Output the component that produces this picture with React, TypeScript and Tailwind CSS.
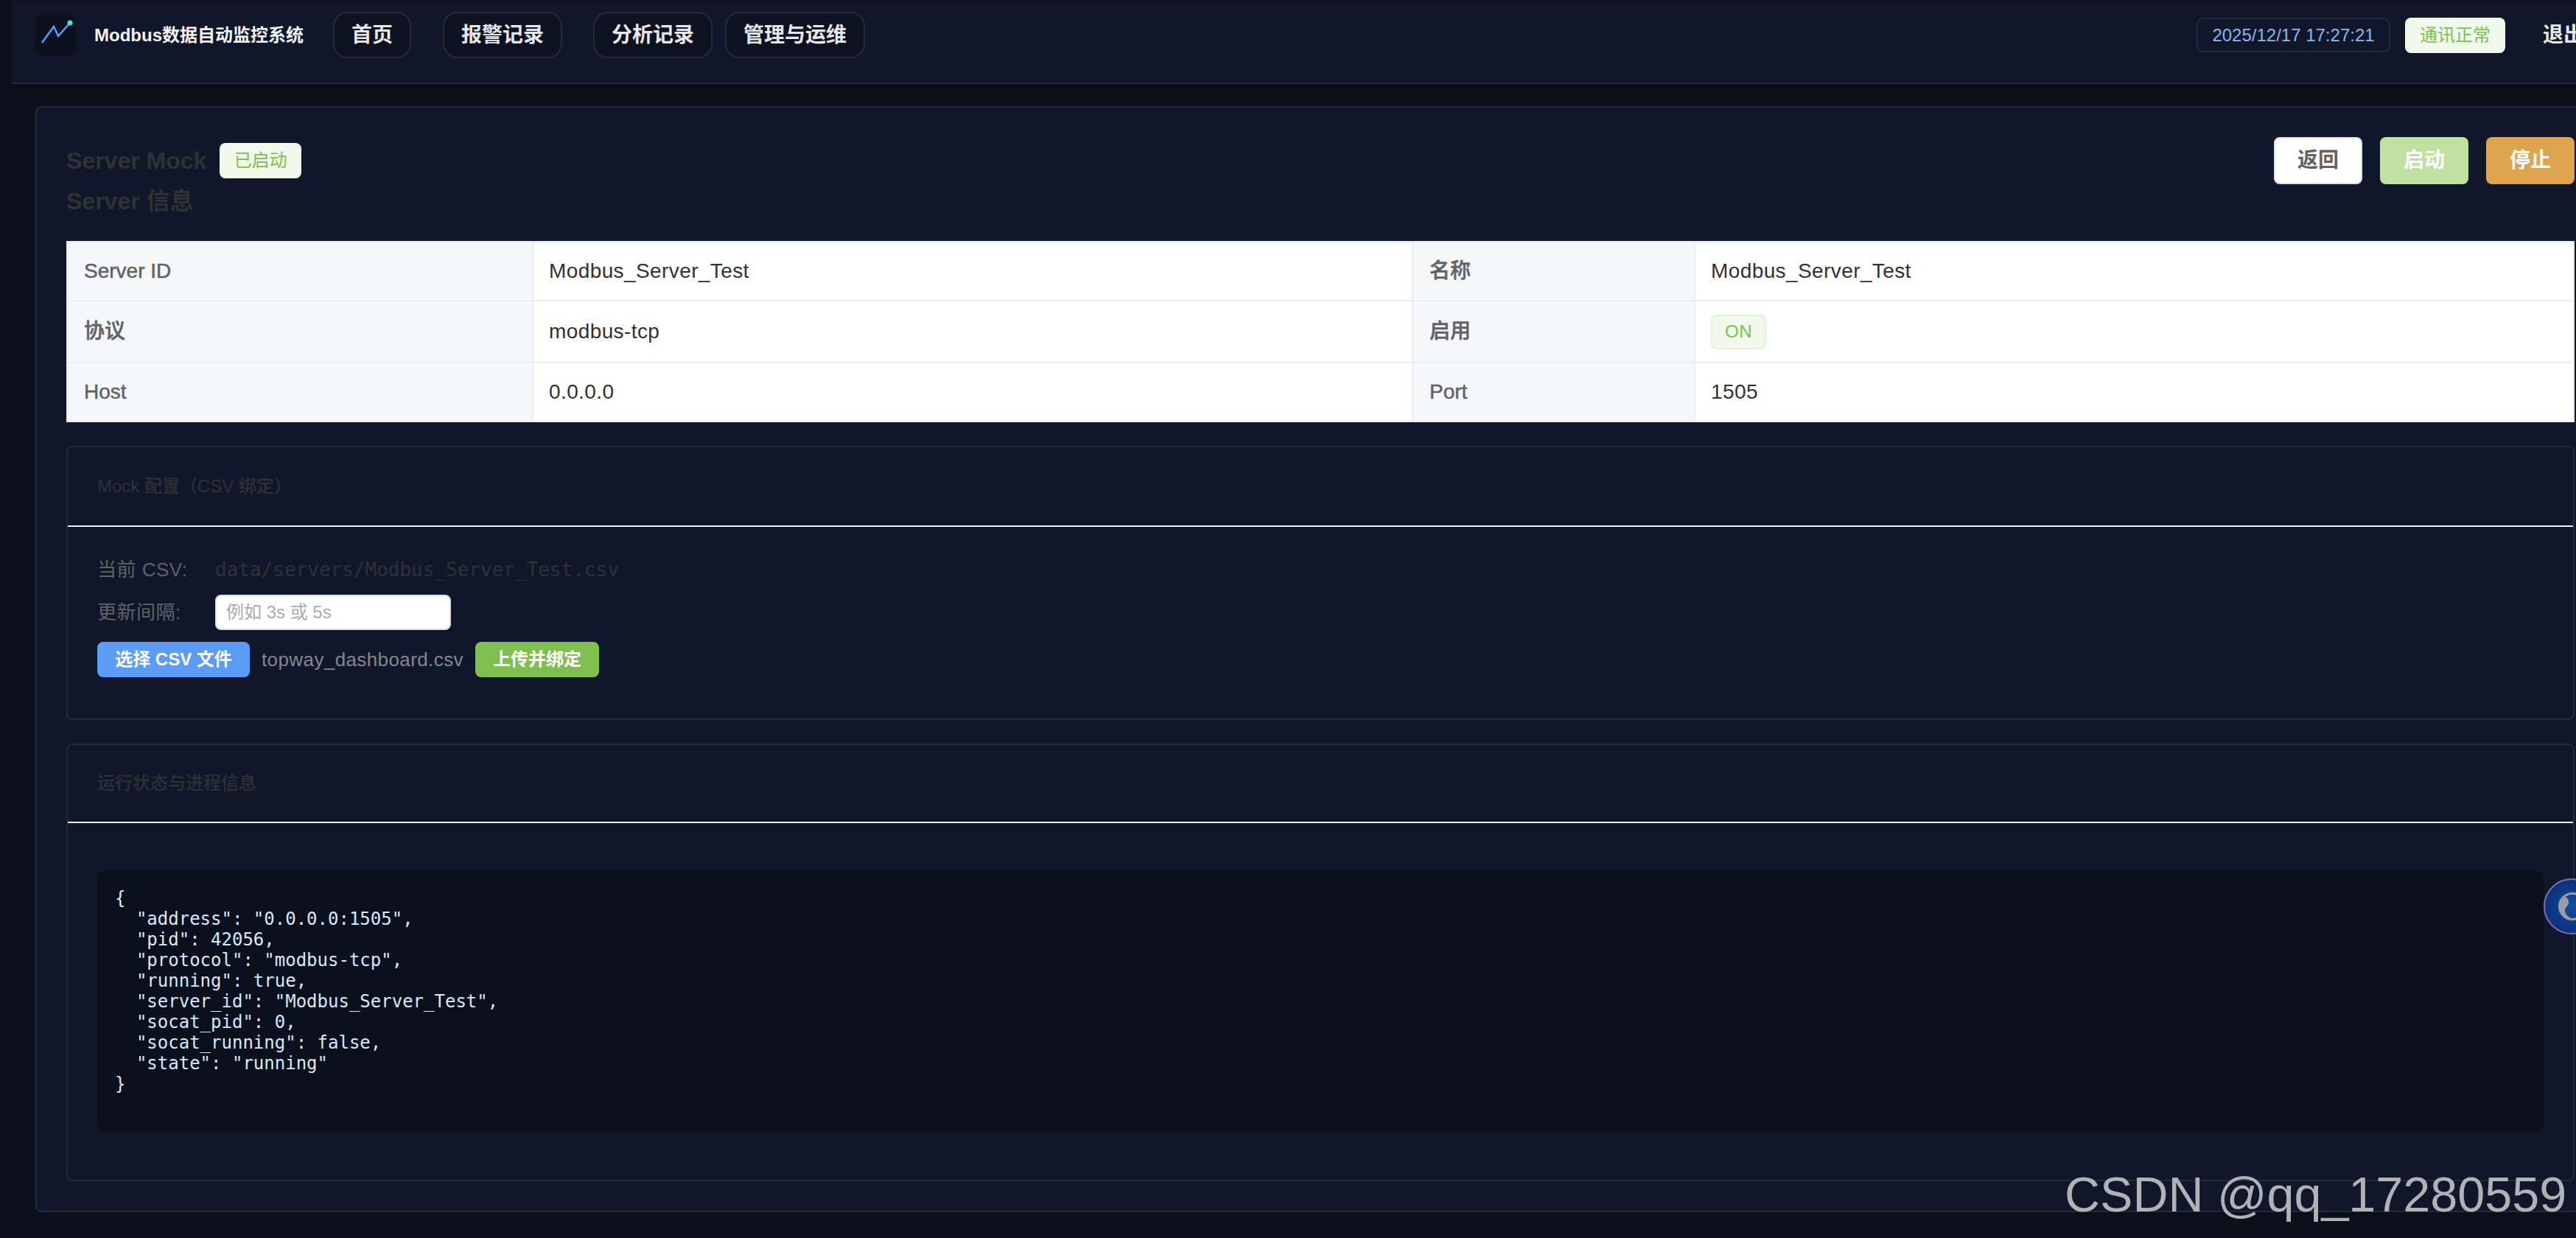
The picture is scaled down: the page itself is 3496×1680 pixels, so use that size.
import { Fragment } from 'react';

const navItems = [
  { label: '首页', className: 'ml-10' },
  { label: '报警记录', className: 'ml-[43px]' },
  { label: '分析记录', className: 'ml-[42px]' },
  { label: '管理与运维', className: 'ml-[17px]' },
];

const infoRows = [
  { a: 'Server ID', b: 'Modbus_Server_Test', c: '名称', d: 'Modbus_Server_Test' },
  { a: '协议', b: 'modbus-tcp', c: '启用', d: 'ON' },
  { a: 'Host', b: '0.0.0.0', c: 'Port', d: '1505' },
];

const statusJson = `{
  "address": "0.0.0.0:1505",
  "pid": 42056,
  "protocol": "modbus-tcp",
  "running": true,
  "server_id": "Modbus_Server_Test",
  "socat_pid": 0,
  "socat_running": false,
  "state": "running"
}

`;

function Logo() {
  return (
    <div className="w-14 h-14 rounded-[12px] bg-[#0b111d] shrink-0">
      <svg width="56" height="56" viewBox="0 0 56 56" fill="none">
        <polyline points="9,38 25,16 31,29 47,11" stroke="#5b9cf5" strokeWidth="2.6" />
        <circle cx="47" cy="11" r="3.6" fill="#5bd0ee" />
      </svg>
    </div>
  );
}

function Header() {
  return (
    <header className="ml-4 mt-px h-[113px] shrink-0 flex items-start pl-8 border-b-2 border-[#232a3a] bg-[#10172a]">
      <div className="mt-[19px] shrink-0">
        <Logo />
      </div>
      <div className="ml-6 mt-[19px] h-14 shrink-0 flex items-center text-[24px] font-bold text-[#f1f3f7] whitespace-nowrap">
        Modbus数据自动监控系统
      </div>
      {navItems.map((item) => (
        <button
          key={item.label}
          className={`${item.className} mt-[15px] h-[63px] shrink-0 px-[23px] rounded-[20px] border-2 border-[#232a3a] bg-[#0c1220] text-[28px] font-semibold text-[#e5e7eb] whitespace-nowrap`}
        >
          {item.label}
        </button>
      ))}
      <div className="ml-auto mt-[23px] h-[47px] w-[263px] shrink-0 flex items-center justify-center rounded-[10px] border-2 border-[#232a3a] bg-[#10172a] text-[24px] text-[#8ab8f0] whitespace-nowrap">
        2025/12/17 17:27:21
      </div>
      <div className="ml-5 mt-[23px] h-[48px] w-[136px] shrink-0 flex items-center justify-center rounded-[8px] bg-[#f0f9eb] text-[24px] text-[#7cc04f] whitespace-nowrap">
        通讯正常
      </div>
      <div className="ml-[51px] mt-[23px] h-[48px] w-[45px] shrink-0 flex items-center overflow-hidden text-[28px] font-semibold text-[#e5e7eb] whitespace-nowrap">
        退出
      </div>
    </header>
  );
}

function InfoTable() {
  return (
    <div className="grid grid-cols-[630px_1192px_381px_1fr] gap-[2px] p-[2px] bg-[#ebeef5] text-[28px]">
      {infoRows.map((row) => (
        <Fragment key={row.a}>
          <div className={`${row.a === '协议' ? 'h-[82px]' : 'h-[78px]'} flex items-center pl-[22px] bg-[#f5f7fa] font-medium text-[#606266] [-webkit-text-stroke:0.5px_#606266]`}>{row.a}</div>
          <div className="flex items-center pl-[21px] bg-white text-[#303133] tracking-[0.4px]">{row.b}</div>
          <div className="flex items-center pl-[22px] bg-[#f5f7fa] font-medium text-[#606266] [-webkit-text-stroke:0.5px_#606266]">{row.c}</div>
          <div className="flex items-center pl-[21px] bg-white text-[#303133] tracking-[0.4px]">
            {row.d === 'ON' ? (
              <span className="h-[47px] w-[75px] flex items-center justify-center rounded-[8px] border-2 border-[#e1f3d8] bg-[#f0f9eb] text-[24px] text-[#7cc04f]">ON</span>
            ) : (
              row.d
            )}
          </div>
        </Fragment>
      ))}
    </div>
  );
}

function MockConfig() {
  return (
    <section className="mt-8 rounded-lg border-2 border-[#232a3a] bg-[#10172a]">
      <div className="h-[108px] flex items-center px-10 border-b-2 border-[#ebeef5] text-[24px] font-medium text-[#303133]">
        Mock 配置（CSV 绑定）
      </div>
      <div className="p-10 text-[26px]">
        <div className="h-9 flex items-center text-[#606266]">
          <span className="w-[160px] tracking-[0.5px]">当前 CSV:</span>
          <span className="font-['DejaVu_Sans_Mono',monospace] text-[#303133]">data/servers/Modbus_Server_Test.csv</span>
        </div>
        <div className="mt-4 h-12 flex items-center text-[#606266]">
          <span className="w-[160px] tracking-[0.5px]">更新间隔:</span>
          <input
            placeholder="例如 3s 或 5s"
            className="w-[320px] h-12 px-[13px] rounded-lg border-2 border-[#dcdfe6] bg-white text-[24px] placeholder:text-[#a8abb2] outline-none"
          />
        </div>
        <div className="mt-4 mb-4 flex items-center">
          <button className="h-12 w-[207px] rounded-lg bg-[#5a9cf8] text-[24px] font-semibold text-white">选择 CSV 文件</button>
          <span className="ml-4 text-[#85878d] tracking-[0.4px]">topway_dashboard.csv</span>
          <button className="ml-4 h-12 w-[168px] rounded-lg bg-[#7fbf50] text-[24px] font-semibold text-white">上传并绑定</button>
        </div>
      </div>
    </section>
  );
}

function RuntimeStatus() {
  return (
    <section className="mt-8 rounded-lg border-2 border-[#232a3a] bg-[#10172a]">
      <div className="h-[106px] flex items-center px-10 border-b-2 border-[#ebeef5] text-[24px] font-medium text-[#303133]">
        运行状态与进程信息
      </div>
      <div className="p-10">
        <pre className="my-6 p-6 rounded-xl bg-[#0a101c] font-['DejaVu_Sans_Mono',monospace] text-[24px] leading-[28px] text-[#dbe7fb]">
          {statusJson}
        </pre>
      </div>
    </section>
  );
}

export default function App() {
  return (
    <div className="relative w-[3496px] h-[1680px] overflow-hidden flex flex-col bg-[#0b0f19] font-['Liberation_Sans','Noto_Sans_CJK_SC',sans-serif]">
      <Header />
      <main className="ml-12 mt-[30px] w-[3488px] h-[1501px] shrink-0 rounded-lg border-2 border-[#232a3a] bg-[#10172a] p-10">
        <div className="flex justify-between w-[3404px]">
          <div>
            <div className="h-16 flex items-center text-[32px] font-bold text-[#303133]">
              Server Mock
              <span className="ml-[18px] h-12 w-[111px] flex items-center justify-center rounded-lg bg-[#f0f9eb] text-[24px] font-normal text-[#7cc04f]">已启动</span>
            </div>
            <div className="h-[46px] flex items-center text-[32px] font-bold text-[#303133]">Server 信息</div>
          </div>
          <div className="flex gap-6 text-[28px] font-semibold">
            <button className="h-16 w-[120px] rounded-lg border-2 border-[#dcdfe6] bg-white text-[#606266]">返回</button>
            <button className="h-16 w-[120px] rounded-lg bg-[#c0e0a2] text-white">启动</button>
            <button className="h-16 w-[120px] rounded-lg bg-[#dfa44f] text-white">停止</button>
          </div>
        </div>
        <div className="mt-[31px] w-[3404px]">
          <InfoTable />
          <MockConfig />
          <RuntimeStatus />
        </div>
      </main>
      <div className="absolute left-[3452px] top-[1192px] w-[76px] h-[76px] rounded-full border-2 border-[#7f72ac] bg-[radial-gradient(circle,#0e4f9e_0%,#0a2270_100%)]">
        <svg width="72" height="72" viewBox="0 0 72 72" fill="none">
          <circle cx="37" cy="36" r="17.5" stroke="#9a9ca8" strokeWidth="3" />
          <path d="M29 24C24 22 20 28 20 36C20 46 28 53 37 53C31 50 27 46 27 41C27 37 32 36 32 30C32 27 31 25 29 24Z" fill="#9a9ca8" />
        </svg>
      </div>
      <div className="absolute left-[2802px] top-[1583px] text-[66.5px] leading-[77px] text-[#b0b2b6] whitespace-nowrap">CSDN @qq_17280559</div>
    </div>
  );
}
